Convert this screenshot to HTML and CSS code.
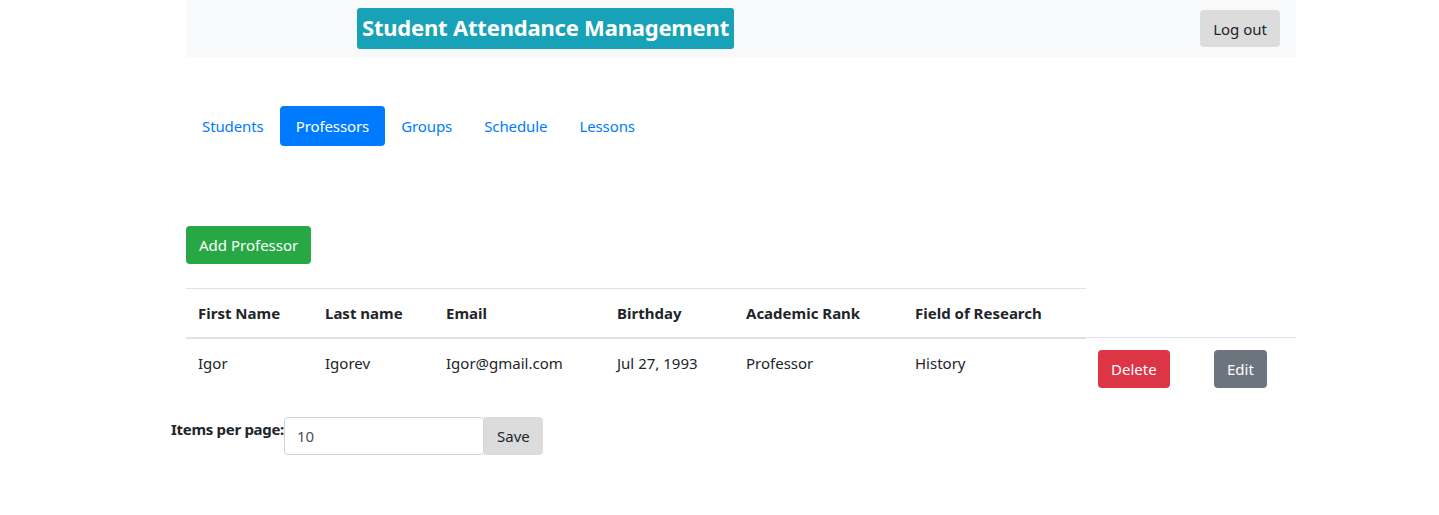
FILE: index.html
```html
<!DOCTYPE html>
<html>
<head>
<meta charset="utf-8">
<link rel="stylesheet" href="styles.css">
</head>
<body>
<div class="wrap">
  <header class="topbar">
    <h1 class="brand">Student Attendance Management</h1>
    <button class="btn btn-light logout">Log out</button>
  </header>
  <nav class="pills">
    <a class="pill">Students</a>
    <a class="pill active">Professors</a>
    <a class="pill">Groups</a>
    <a class="pill">Schedule</a>
    <a class="pill">Lessons</a>
  </nav>
  <div class="actions">
    <button class="btn btn-success">Add Professor</button>
  </div>
  <table class="table">
    <colgroup>
      <col style="width:127px"><col style="width:121px"><col style="width:171px"><col style="width:129px">
      <col style="width:169px"><col style="width:183px"><col style="width:116px"><col style="width:94px">
    </colgroup>
    <thead>
      <tr>
        <th>First Name</th><th>Last name</th><th>Email</th><th>Birthday</th><th>Academic Rank</th><th>Field of Research</th>
      </tr>
    </thead>
    <tbody>
      <tr>
        <td>Igor</td><td>Igorev</td><td>Igor@gmail.com</td><td>Jul 27, 1993</td><td>Professor</td><td>History</td>
        <td><button class="btn btn-danger">Delete</button></td>
        <td><button class="btn btn-secondary">Edit</button></td>
      </tr>
    </tbody>
  </table>
</div>
<form class="pager">
  <label class="pager-label">Items per page:</label>
  <input class="pager-input" type="text" value="10">
  <button class="btn btn-light save" type="button">Save</button>
</form>
</body>
</html>
```

FILE: styles.css
```css
* { box-sizing: border-box; }
body {
  margin: 0;
  font-family: "Noto Sans", "Open Sans", sans-serif;
  font-size: 15px;
  color: #212529;
  background: #fff;
}
.wrap {
  width: 1110px;
  margin-left: 186px;
}
.topbar {
  background: #f8f9fa;
  height: 57px;
  display: flex;
  align-items: flex-start;
  justify-content: space-between;
  padding: 8px 16px 0 171px;
}
.brand {
  margin: 0;
  background: #17a2b8;
  color: #fff;
  font-size: 22px;
  font-weight: 700;
  height: 41px;
  line-height: 38px;
  padding: 0 5px;
  border-radius: 3px;
  letter-spacing: -0.2px;
}
.btn {
  font-family: inherit;
  font-size: 15px;
  border: 1px solid transparent;
  border-radius: 4px;
  height: 38px;
  padding: 0 12px;
  line-height: 36px;
  cursor: pointer;
}
.btn-light { background: #dcdcdc; color: #212529; }
.logout { margin-top: 2px; height: 37px; }
.btn-success { background: #28a745; color: #fff; }
.btn-danger { background: #dc3545; color: #fff; }
.btn-secondary { background: #6c757d; color: #fff; }
.pills {
  display: flex;
  margin-top: 49px;
}
.pill {
  color: #007bff;
  padding: 0 16px;
  height: 40px;
  line-height: 40px;
  border-radius: 4px;
  letter-spacing: -0.1px;
}
.pill.active { background: #007bff; color: #fff; }
.actions { margin-top: 80px; }
.table {
  margin-top: 24px;
  width: 1110px;
  border-collapse: collapse;
  table-layout: fixed;
}
.table th {
  text-align: left;
  font-weight: 700;
  padding: 12px;
  height: 49px;
  border-top: 1px solid #dee2e6;
  border-bottom: 2px solid #dee2e6;
}
.table td {
  padding: 12px;
  line-height: 24px;
  border-top: 1px solid #dee2e6;
  vertical-align: top;
}
.table td .btn { display: block; }
.pager {
  display: flex;
  align-items: flex-start;
  margin: 17px 0 0 171px;
}
.pager-label {
  font-weight: 700;
  margin-top: 2px;
  letter-spacing: -0.3px;
}
.pager-input {
  width: 200px;
  height: 38px;
  border: 1px solid #ced4da;
  border-radius: 4px;
  padding: 0 12px;
  font-family: inherit;
  font-size: 15px;
  color: #495057;
  margin: 0;
}
.save { border-radius: 0 4px 4px 0; }
```
